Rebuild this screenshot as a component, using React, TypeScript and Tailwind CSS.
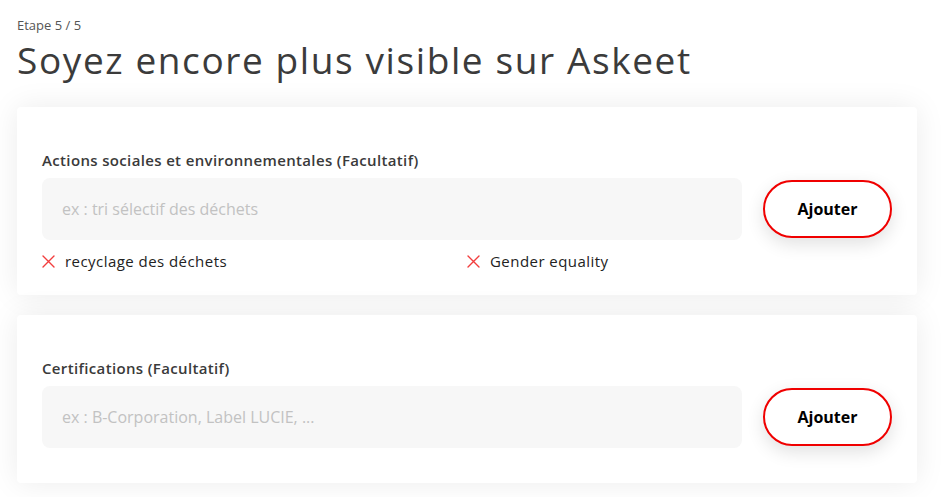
import React from "react";

const font = { fontFamily: "'Open Sans', 'Noto Sans', sans-serif" };

function XIcon() {
  return (
    <svg width="13" height="13" viewBox="0 0 13 13" className="shrink-0">
      <path d="M1 1 L12 12 M12 1 L1 12" stroke="#f23d3d" strokeWidth="1.4" strokeLinecap="round" />
    </svg>
  );
}

function AddButton() {
  return (
    <button className="w-[129px] h-[58px] shrink-0 rounded-full border-2 border-[#f00000] bg-white text-[16px] font-bold text-black shadow-[0_6px_18px_rgba(0,0,0,0.12)]">
      Ajouter
    </button>
  );
}

function Field({ label, placeholder }: { label: string; placeholder: string }) {
  return (
    <>
      <div className="text-[15px] font-semibold tracking-[0.35px] text-[#3a3a3a] leading-[20px]">{label}</div>
      <div className="mt-[8px] flex items-center gap-[21px]">
        <div className="flex-1 h-[62px] rounded-[8px] bg-[#f7f7f7] flex items-center px-[20px] text-[16px] text-[#c2c2c2]">
          {placeholder}
        </div>
        <AddButton />
      </div>
    </>
  );
}

export default function App() {
  return (
    <div className="min-h-[497px] bg-white pl-[17px] pr-[26px] pt-[17px] pb-[15px] text-[#333]" style={font}>
      <div className="text-[13px] leading-[16px] text-[#555]">Etape 5 / 5</div>
      <h1 className="mt-[7px] text-[37px] leading-[40px] tracking-[1.6px] text-[#3b3b3b] font-normal">Soyez encore plus visible sur Askeet</h1>
      <div className="mt-[27px] flex flex-col gap-[20px]">
        <div className="rounded-[4px] bg-white px-[25px] pt-[43px] pb-[24px] shadow-[0_0_30px_rgba(0,0,0,0.08)]">
          <Field label="Actions sociales et environnementales (Facultatif)" placeholder="ex : tri sélectif des déchets" />
          <div className="mt-[11px] grid grid-cols-2 text-[15px] tracking-[0.45px] text-[#222] leading-[20px]">
            <div className="flex items-center gap-[10px]">
              <XIcon />
              <span>recyclage des déchets</span>
            </div>
            <div className="flex items-center gap-[10px]">
              <XIcon />
              <span>Gender equality</span>
            </div>
          </div>
        </div>
        <div className="rounded-[4px] bg-white px-[25px] pt-[43px] pb-[35px] shadow-[0_0_30px_rgba(0,0,0,0.08)]">
          <Field label="Certifications (Facultatif)" placeholder="ex : B-Corporation, Label LUCIE, ..." />
        </div>
      </div>
    </div>
  );
}
